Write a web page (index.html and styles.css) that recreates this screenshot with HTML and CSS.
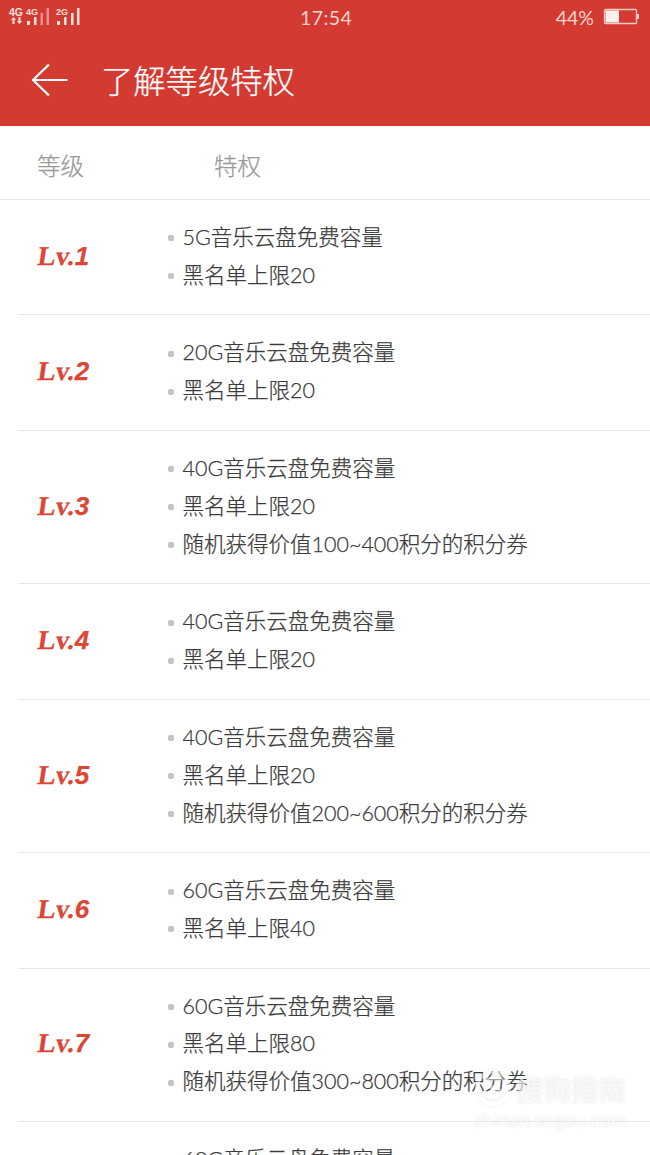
FILE: index.html
```
<!DOCTYPE html>
<html lang="zh-CN">
	<head>
		<meta charset="utf-8">
		<title>了解等级特权</title>
		<link rel="stylesheet" href="styles.css">
	</head>
	<body>
		<header>
			<div class="status">
				<svg class="signal" width="82" height="30" viewBox="0 0 82 30">
					<g fill="#fde0dc" font-family="Liberation Sans" font-weight="bold" letter-spacing="0">
						<text x="9" y="16" font-size="10.5">4G</text>
						<text x="26" y="15" font-size="9">4G</text>
						<text x="56" y="15" font-size="9">2G</text>
					</g>
					<path fill="#fde0dc" d="M11 20l2.500-3 2.500 3h-1.500v4h-2v-4zM17 21h1.500v-4h2v4h1.500l-2.500 3zM27 21h3v4h-3zM34 17h2.500v8H34zM57 21h3v4h-3zM64 17h2.500v8H64zM71 13h2.500v12H71zM77 8h2.500v17H77z"/>
					<path fill="#e99088" d="M40.500 13h2.500v12h-2.500zM46.500 8h2.500v17h-2.500z"/>
				</svg>
				<span class="clock">17:54</span>
				<span class="percent">44%</span>
				<svg class="battery" width="38" height="18" viewBox="0 0 38 18">
					<rect x="1.500" y="1.500" width="32" height="14" rx="1" fill="none" stroke="#f9c9c3" stroke-width="1.300"/>
					<path fill="#fff0ed" d="M2.500 2.500H16v12H2.500z"/>
					<path fill="#f9c9c3" d="M34 6h2v5h-2z"/>
				</svg>
			</div>
			<div class="titlebar">
				<svg class="back" width="38" height="34" viewBox="0 0 38 34">
					<path fill="none" stroke="#fff" stroke-width="2.200" d="M18 1.500L2 17l16 15.500M2 17h34.500"/>
				</svg>
				<h1>了解等级特权</h1>
			</div>
		</header>

		<div class="heading">
			<span class="col-level">等级</span>
			<span class="col-rights">特权</span>
		</div>

		<div class="row">
			<div class="level"><span>Lv.</span><b>1</b></div>
			<ul>
				<li>5G音乐云盘免费容量</li>
				<li>黑名单上限20</li>
			</ul>
		</div>
		<div class="row">
			<div class="level"><span>Lv.</span><b>2</b></div>
			<ul>
				<li>20G音乐云盘免费容量</li>
				<li>黑名单上限20</li>
			</ul>
		</div>
		<div class="row">
			<div class="level"><span>Lv.</span><b>3</b></div>
			<ul>
				<li>40G音乐云盘免费容量</li>
				<li>黑名单上限20</li>
				<li>随机获得价值100~400积分的积分券</li>
			</ul>
		</div>
		<div class="row">
			<div class="level"><span>Lv.</span><b>4</b></div>
			<ul>
				<li>40G音乐云盘免费容量</li>
				<li>黑名单上限20</li>
			</ul>
		</div>
		<div class="row">
			<div class="level"><span>Lv.</span><b>5</b></div>
			<ul>
				<li>40G音乐云盘免费容量</li>
				<li>黑名单上限20</li>
				<li>随机获得价值200~600积分的积分券</li>
			</ul>
		</div>
		<div class="row">
			<div class="level"><span>Lv.</span><b>6</b></div>
			<ul>
				<li>60G音乐云盘免费容量</li>
				<li>黑名单上限40</li>
			</ul>
		</div>
		<div class="row">
			<div class="level"><span>Lv.</span><b>7</b></div>
			<ul>
				<li>60G音乐云盘免费容量</li>
				<li>黑名单上限80</li>
				<li>随机获得价值300~800积分的积分券</li>
			</ul>
		</div>
		<div class="row last">
			<ul>
				<li class="cut">60G音乐云盘免费容量</li>
			</ul>
		</div>

		<div class="watermark">
			<div class="brand">
				<svg width="38" height="38" viewBox="0 0 38 38">
					<circle cx="19" cy="19" r="16" fill="none" stroke="#fff" stroke-width="4"/>
					<path fill="none" stroke="#fff" stroke-width="4" d="M27 12c-5-4-15-3-15 2s14 4 14 9-11 6-16 2"/>
				</svg>
				<span>搜狗指南</span>
			</div>
			<div class="site">zhinan.sogou.com</div>
		</div>
	</body>
</html>
```
FILE: styles.css
```
* { box-sizing: border-box; }

body { margin: 0; height: 1155px; overflow: hidden; position: relative;
	background: #fff; color: #3c3c3c;
	font-family: Lato, "Noto Sans CJK SC", sans-serif; font-weight: 300;
	-webkit-text-stroke: 0.25px;
}

header { height: 126px; background: #d33a31; color: #fff; }

.status { display: flex; height: 34px; color: #fbd5d0; font-size: 19.5px; line-height: 35px; 
	-webkit-text-stroke: 0; }
.signal { flex: none; }
.clock { margin-left: 218px; width: 54px; letter-spacing: 0.4px; font-weight: 400; }
.percent { margin-left: auto; margin-right: 9px; font-weight: 400; }
.battery { margin: 8px 9px 0 0; }

.titlebar { display: flex; align-items: center; height: 91px; padding-left: 31px; }
.titlebar h1 { margin: 2px 0 0 32px; font-size: 32.3px; line-height: 48px; font-weight: 300; }

.heading { display: flex; height: 74px; padding-left: 37px; 
	border-bottom: 1px solid #e8e8e8;
	color: #999; font-size: 23.5px; line-height: 80px; }
.col-level { width: 177px; }

.row { display: flex; align-items: center; margin-left: 18px; 
	padding: 18px 0 20.7px; border-bottom: 1px solid #e8e8e8; }
.row.last { border: none; padding-left: 148px; }

.level { display: flex; align-items: baseline; width: 148px; padding-left: 20px; color: #dc4636;
	font: bold 26px/36px "Liberation Serif", serif; }
.level span { font-size: 27px; transform: skewX(-8deg); }
.level b { font: italic bold 26px/36px "Liberation Sans", sans-serif; }

ul { list-style: none; margin: 0; padding: 0; }
li { display: flex; align-items: center; height: 37.9px; 
	font-size: 21.5px; line-height: 38px; white-space: nowrap; }
li:before { content: ""; width: 6px; height: 6px; margin: 3px 8.5px 0 2px;
	border-radius: 2px; background: #c4c4c4; }
li.cut:before { background: none; }

/* sits over the list, bottom right */
.watermark { position: absolute; left: 474px; top: 1068px; color: rgba(255,255,255,0.65);
	font-weight: 700; text-shadow: 0 0 3px rgba(0,0,0,0.1); -webkit-text-stroke: 0; }
.brand { display: flex; align-items: center; gap: 4px; height: 40px; font-size: 27.5px; }
.brand svg { opacity: 0.5; filter: drop-shadow(0 0 2px rgba(0,0,0,0.12)); }
.site { font-size: 19.5px; line-height: 24px; font-weight: 400; }
```
